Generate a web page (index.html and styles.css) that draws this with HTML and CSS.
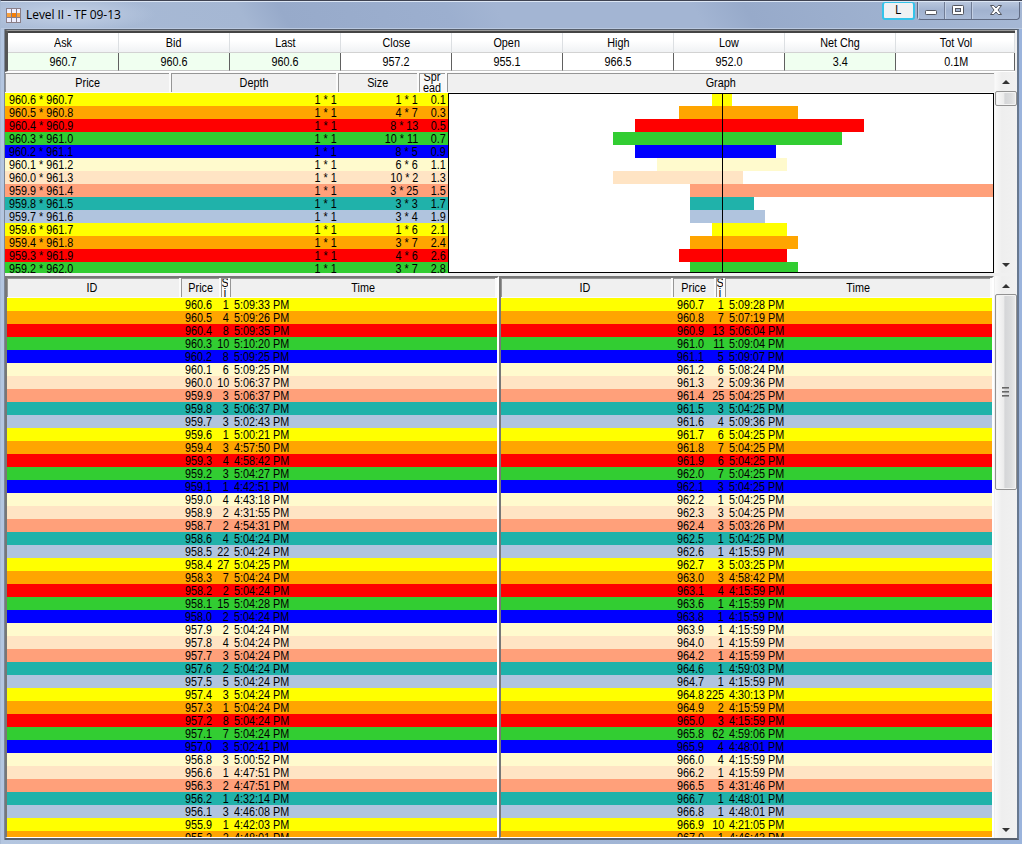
FILE: index.html
```html
<!DOCTYPE html>
<html lang="en">
<head>
<meta charset="utf-8">
<title>Level II - TF 09-13</title>
<link rel="stylesheet" href="styles.css">
</head>
<body>
<div class="window">
  <header class="titlebar">
    <svg class="app-icon" width="15" height="15" viewBox="0 0 15 15"><rect width="15" height="15" fill="#8a7f88"/><path fill="#eeeeff" d="M1 1h4v4H1zM6 1h4v4H6zM11 1h3v4h-3zM1 10h4v4H1zM6 10h4v4H6zM11 10h3v4h-3z"/><path fill="#f9a13c" d="M1 5h4v4H1zM11 5h3v4h-3z"/><path fill="#f77f08" d="M6 5h4v4H6z"/></svg>
    <h1 class="title">Level II - TF 09-13</h1>
    <button class="link-btn"><span class="t">L</span></button>
    <div class="controls">
      <button class="ctl"><svg width="14" height="14" viewBox="0 0 14 14"><rect x="1.5" y="6.500" width="11" height="4" rx=".8" fill="#fff" stroke="#53565f"/></svg></button>
      <button class="ctl"><svg width="14" height="14" viewBox="0 0 14 14"><rect x="1.5" y="1.5" width="11" height="9" rx=".8" fill="#fff" stroke="#53565f"/><rect x="4.5" y="4.5" width="5" height="3" fill="#a5b5d0" stroke="#53565f"/></svg></button>
      <button class="ctl ctl-close"><svg width="14" height="14" viewBox="0 0 14 14"><path d="M1.500 1.500h3.300L7 4l2.200-2.500h3.300L9 6l3.500 4.500H9.200L7 8l-2.200 2.500H1.500L5 6z" fill="#fff" stroke="#53565f"/></svg></button>
    </div>
  </header>
  <main class="client">
    <section class="quotes" id="quotes"></section>
    <section class="book">
      <div class="book-table">
        <div class="head book-head">
          <div class="hc"><span class="t">Price</span></div>
          <div class="hc"><span class="t">Depth</span></div>
          <div class="hc"><span class="t">Size</span></div>
          <div class="hc wrap"><span class="t">Spr<br>ead</span></div>
          <div class="hc"><span class="t">Graph</span></div>
        </div>
        <div class="book-body">
          <div class="book-rows" id="book"></div>
          <div class="graph"><div class="bars" id="bars"></div><div class="mid"></div></div>
        </div>
      </div>
      <div class="scroll">
        <i class="arrow up"></i><div class="thumb thumb-small"></div><i class="arrow down"></i>
      </div>
    </section>
    <section class="sides">
      <div class="pane pane-bid">
        <div class="head pane-head">
          <div class="hc id"><span class="t">ID</span></div>
          <div class="hc"><span class="t">Price</span></div>
          <div class="hc wrap"><span class="t">S<br>i</span></div>
          <div class="hc"><span class="t">Time</span></div>
        </div>
        <div class="rows" id="bids"></div>
      </div>
      <div class="pane pane-ask">
        <div class="head pane-head">
          <div class="hc id"><span class="t">ID</span></div>
          <div class="hc"><span class="t">Price</span></div>
          <div class="hc wrap"><span class="t">S<br>i</span></div>
          <div class="hc"><span class="t">Time</span></div>
        </div>
        <div class="rows" id="asks"></div>
      </div>
      <div class="scroll">
        <i class="arrow up"></i><div class="thumb thumb-large"><i></i><i></i><i></i></div><i class="arrow down"></i>
      </div>
    </section>
  </main>
</div>
<script src="app.js"></script>
</body>
</html>
```

FILE: styles.css
```css
* { box-sizing: border-box; }
body { margin: 0; width: 1022px; height: 844px; overflow: hidden; font: 12px/13px "Liberation Sans", Arial, sans-serif; color: #000; }
.t { display: inline-block; transform: scaleX(.9); white-space: nowrap; }

.window { width: 1022px; height: 844px; display: flex; flex-direction: column; padding: 0 3px 4px 4px; border-top: 1px solid #3f4352; border-left: 1px solid #a9bbd5; background: linear-gradient(90deg, #b4c6e0, #a3b6d4 50%, #9bb4dc); }
.titlebar { height: 28px; margin: 0 -3px 0 -4px; padding-left: 5px; display: flex; align-items: flex-start; border-top: 1px solid #dce6f4; border-bottom: 1px solid #b9c8df;
  background: radial-gradient(ellipse 90px 18px at 65px 12px, #c3d0e4, #b4c4dd 55%, transparent), linear-gradient(60deg, #a9bbd6 0, #a5b7d3 24%, #97aaca 28%, #9cafcf 44%, #a3b5d3 49%, #a3b5d3 68%, #97aaca 73%, #9fb2d0 88%, #a6b8d5); }
.app-icon { margin-top: 6px; }
.title { margin: 5px 0 0 5px; font: 12px/16px "Open Sans", sans-serif; letter-spacing: -.06px; white-space: nowrap; }
.link-btn { margin: 0 2px 0 auto; width: 33px; height: 18px; padding: 0; border: 2px solid #35c3ea; border-top-width: 1px; border-radius: 3px; background: #f0f1f3; font: 12px/13px "Liberation Sans", sans-serif; }
.controls { display: flex; height: 18px; margin-right: 2px; border: 1px solid #606b83; border-top: 0; border-radius: 0 0 4px 4px; background: linear-gradient(#b8c6dd, #a1b2cf 50%, #a9bad6); }
.ctl { width: 27px; height: 17px; padding: 0; border: 0; border-right: 1px solid #707c95; background: none; display: flex; justify-content: center; align-items: center; box-shadow: inset 1px 0 #c4d0e4; }
.ctl-close { width: 47px; border: 0; }

.client { flex: 1; min-height: 0; display: flex; flex-direction: column; border: 1px solid #565e6b; border-width: 1px 2px 2px 0; border-right-color: #68788f; background: #f0f0f0; box-shadow: -1px 0 #7c8798; }

.quotes { display: grid; grid-template-columns: repeat(8, 111px) 1fr; height: 42px; flex: none; margin-right: 2px; padding-top: 2px; border: solid #555; border-width: 1px 0 1px 3px; border-top-color: #999; border-bottom-color: #fff; background: linear-gradient(#444, #444) top / 100% 2px no-repeat #fff; }
.quote { display: grid; grid-template-rows: 20px 18px; text-align: center; }
.q-label { padding-top: 4px; background: linear-gradient(#fff 40%, #f0f2f4); border-right: 1px solid #dcdfe2; border-bottom: 1px solid #d2d2d2; }
.q-value { padding-top: 3px; background: #fff; border-right: 1px solid #606060; border-bottom: 1px solid #c6c6c6; background-clip: padding-box; }
.q-value.tint { background: #f0fff0; }
.quote:last-child { padding-right: 0; }
.quote:last-child .t { margin-right: -2px; }

.head { display: grid; background: #fbfbfb; }
.hc { overflow: hidden; display: flex; align-items: center; justify-content: center; border: 1px solid #969696; border-width: 1px 0 0 1px; background: #f0f0f0; }
.hc.id { padding-right: 3px; }
.wrap { text-align: center; line-height: 11px; background: #f8f8f8; }

.book { display: flex; flex: none; height: 201px; background: #f5f5f5; }
.book-table { width: 989px; }
.book-head { height: 21px; padding: 1px 0; grid-template-columns: 164px 165px 79px 26px 547px; column-gap: 2px; }
.book-body { display: flex; height: 180px; overflow: hidden; }
.book-rows { width: 443px; height: 180px; overflow: hidden; }
.book-row { display: grid; grid-template-columns: 163px 165px 81px 28px; height: 13px; padding: 1px 0 0 4px; }
.book-row > :first-child .t { transform-origin: left; }
.book-row > :not(:first-child) { text-align: right; }
.book-row > :not(:first-child) .t { transform-origin: right; }
.graph { position: relative; width: 546px; height: 180px; border: 1px solid #000; background: #fff; overflow: hidden; }
.bars { margin-top: -1px; }
.bar { height: 13px; }
.mid { position: absolute; top: 0; bottom: 0; left: 273px; width: 1px; background: #000; }

.scroll { width: 22px; margin-left: 1px; display: flex; flex-direction: column; align-items: center; background: linear-gradient(90deg, #fafafa, #eee 30%, #f1f1f1); }
.arrow { width: 0; height: 0; border: 4px solid transparent; }
.arrow.up { border-top: 0; border-bottom-color: #333; margin: 8px 0 7px; }
.arrow.down { border-bottom: 0; border-top-color: #333; margin: auto 0 6px; }
.thumb { width: 22px; border: 1px solid #929292; border-radius: 2px; background: linear-gradient(90deg, #fafafa, #ececec 38%, #d5d6d8 45%, #dcddde 75%, #ececec); box-shadow: inset 0 0 0 1px #f3f3f3; }
.thumb-small { height: 15px; }
.thumb-large { height: 196px; margin-top: -1px; padding-right: 2px; display: flex; flex-direction: column; align-items: center; justify-content: center; gap: 2px; }
.thumb-large i { width: 7px; height: 2px; border-bottom: 1px solid #999; background: #666; }

.sides { flex: 1; min-height: 0; display: flex; padding-top: 3px; }
.pane { display: flex; flex-direction: column; border: 2px solid #777; border-right: 1px solid #fff; border-bottom: 1px solid #fff; min-height: 0; }
.pane-bid { width: 494px; border-right-width: 2px; }
.pane-ask { width: 495px; border-right-width: 2px; }
.pane-head { height: 20px; flex: none; padding-bottom: 1px; column-gap: 2px; }
.pane-bid .pane-head { grid-template-columns: 172px 38px 7px 265px; }
.pane-ask .pane-head { grid-template-columns: 170px 41px 7px 265px; }
.pane .wrap { line-height: 10px; }
.rows { flex: 1; min-height: 0; overflow: hidden; }
.row { display: grid; height: 13px; padding-top: 1px; }
.pane-bid .row { grid-template-columns: 178px 27px 17px 1fr; }
.pane-ask .row { grid-template-columns: 176px 27px 20px 1fr; }
.row .t { transform-origin: left; }
.row .size { display: flex; justify-content: flex-end; }
.row .size .t { transform-origin: right; }
.row .time { padding-left: 5px; }

.yellow { background: #ff0; }
.orange { background: #ffa500; }
.red { background: #f00; }
.green { background: #32cd32; }
.blue { background: #00f; }
.cream { background: #fffacd; }
.bisque { background: #ffe4c4; }
.salmon { background: #ffa07a; }
.teal { background: #20b2aa; }
.steel { background: #b0c4de; }
```

FILE: app.js
```js
const colors = ["yellow", "orange", "red", "green", "blue", "cream", "bisque", "salmon", "teal", "steel"];
const text = (s) => `<span class="t">${s}</span>`;
const fill = (id, items, fn) => { document.getElementById(id).innerHTML = items.map(fn).join(""); };

const quotes = [["Ask", "960.7", 1], ["Bid", "960.6", 1], ["Last", "960.6", 1], ["Close", "957.2"], ["Open", "955.1"], ["High", "966.5"], ["Low", "952.0"], ["Net Chg", "3.4", 1], ["Tot Vol", "0.1M"]];
fill("quotes", quotes, ([label, value, tint]) =>
  `<div class="quote"><div class="q-label">${text(label)}</div><div class="q-value${tint ? " tint" : ""}">${text(value)}</div></div>`);

const parse = (s) => s.trim().split("\n").map((line) => line.trim().split(" "));

const bids = parse(`960.6 1 5:09:33
960.5 4 5:09:26
960.4 8 5:09:35
960.3 10 5:10:20
960.2 8 5:09:25
960.1 6 5:09:25
960.0 10 5:06:37
959.9 3 5:06:37
959.8 3 5:06:37
959.7 3 5:02:43
959.6 1 5:00:21
959.4 3 4:57:50
959.3 4 4:58:42
959.2 3 5:04:27
959.1 1 4:42:51
959.0 4 4:43:18
958.9 2 4:31:55
958.7 2 4:54:31
958.6 4 5:04:24
958.5 22 5:04:24
958.4 27 5:04:25
958.3 7 5:04:24
958.2 2 5:04:24
958.1 15 5:04:28
958.0 2 5:04:24
957.9 2 5:04:24
957.8 4 5:04:24
957.7 3 5:04:24
957.6 2 5:04:24
957.5 5 5:04:24
957.4 3 5:04:24
957.3 1 5:04:24
957.2 8 5:04:24
957.1 7 5:04:24
957.0 3 5:02:41
956.8 3 5:00:52
956.6 1 4:47:51
956.3 2 4:47:51
956.2 1 4:32:14
956.1 3 4:46:08
955.9 1 4:42:03
955.2 2 4:48:01`);

const asks = parse(`960.7 1 5:09:28
960.8 7 5:07:19
960.9 13 5:06:04
961.0 11 5:09:04
961.1 5 5:09:07
961.2 6 5:08:24
961.3 2 5:09:36
961.4 25 5:04:25
961.5 3 5:04:25
961.6 4 5:09:36
961.7 6 5:04:25
961.8 7 5:04:25
961.9 6 5:04:25
962.0 7 5:04:25
962.1 3 5:04:25
962.2 1 5:04:25
962.3 3 5:04:25
962.4 3 5:03:26
962.5 1 5:04:25
962.6 1 4:15:59
962.7 3 5:03:25
963.0 3 4:58:42
963.1 4 4:15:59
963.6 1 4:15:59
963.8 1 4:15:59
963.9 1 4:15:59
964.0 1 4:15:59
964.2 1 4:15:59
964.6 1 4:59:03
964.7 1 4:15:59
964.8 225 4:30:13
964.9 2 4:15:59
965.0 3 4:15:59
965.8 62 4:59:06
965.9 4 4:48:01
966.0 4 4:15:59
966.2 1 4:15:59
966.5 5 4:31:46
966.7 1 4:48:01
966.8 1 4:48:01
966.9 10 4:21:05
967.0 1 4:46:43`);

const row = ([price, size, time], i) =>
  `<div class="row ${colors[i % 10]}"><span></span><span>${text(price)}</span><span class="size">${text(size)}</span><span class="time">${text(time + " PM")}</span></div>`;
fill("bids", bids, row);
fill("asks", asks, row);

const levels = bids.slice(0, 14).map((b, i) => [b, asks[i]]);
fill("book", levels, ([b, a], i) =>
  `<div class="book-row ${colors[i % 10]}"><span>${text(`${b[0]} * ${a[0]}`)}</span><span>${text("1 * 1")}</span><span>${text(`${b[1]} * ${a[1]}`)}</span><span>${text((a[0] - b[0]).toFixed(1))}</span></div>`);

const unit = 11;
fill("bars", levels, ([b, a], i) =>
  `<div class="bar ${colors[i % 10]}" style="margin-left:${274 - unit * b[1]}px;width:${unit * (+b[1] + +a[1]) - 2}px"></div>`);
```
